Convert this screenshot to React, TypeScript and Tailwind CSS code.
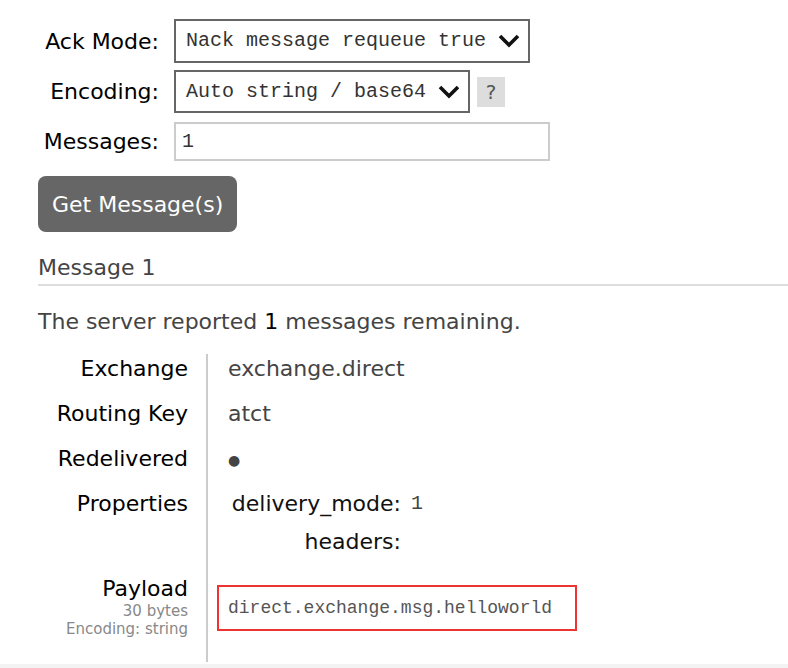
const sans = "font-['DejaVu_Sans',Verdana,sans-serif]"
const mono = "font-['Liberation_Mono','DejaVu_Sans_Mono',monospace]"

function Chevron() {
  return (
    <svg width="22" height="14" viewBox="0 0 22 14" className="shrink-0">
      <polyline points="2,2 11,11 20,2" fill="none" stroke="#111" strokeWidth="3.6" strokeLinejoin="miter" />
    </svg>
  )
}

const rows = [
  { label: "Exchange", value: "exchange.direct" },
  { label: "Routing Key", value: "atct" },
  { label: "Redelivered", value: "●" },
]

export default function App() {
  return (
    <div className={`${sans} min-h-[668px] bg-white flex flex-col`}>
      <div className="pl-[38px] pt-[19px] flex-1">
        {/* get messages form */}
        <div className="flex flex-col">
          <div className="flex items-center h-[44px]">
            <label className="w-[121px] text-right text-[22px] text-black">Ack Mode:</label>
            <div className="ml-[15px] w-[356px] h-[44px] border-2 border-[#666] flex items-center justify-between pl-[10px] pr-[8px]">
              <span className={`${mono} text-[20px] text-[#333]`}>Nack message requeue true</span>
              <Chevron />
            </div>
          </div>
          <div className="flex items-center h-[43px] mt-[7px]">
            <label className="w-[121px] text-right text-[22px] text-black">Encoding:</label>
            <div className="ml-[15px] w-[296px] h-[43px] border-2 border-[#666] flex items-center justify-between pl-[10px] pr-[8px]">
              <span className={`${mono} text-[20px] text-[#333]`}>Auto string / base64</span>
              <Chevron />
            </div>
            <span className="ml-[7px] w-[28px] h-[30px] bg-[#dddddd] text-[#555] text-[20px] flex items-center justify-center">?</span>
          </div>
          <div className="flex items-center h-[39px] mt-[9px]">
            <label className="w-[121px] text-right text-[22px] text-black">Messages:</label>
            <div className={`${mono} ml-[15px] w-[376px] h-[39px] border-2 border-[#cccccc] flex items-center pl-[6px] text-[20px] text-[#333]`}>1</div>
          </div>
        </div>

        <button className="mt-[15px] w-[199px] h-[56px] bg-[#666666] rounded-[8px] text-white text-[22px] text-left pl-[14px]">
          Get Message(s)
        </button>

        {/* result */}
        <div className="mt-[21px] border-b-2 border-[#dddddd] pb-[1px]">
          <h3 className="text-[22px] leading-[30px] text-[#444]">Message 1</h3>
        </div>
        <p className="mt-[21px] text-[22px] leading-[30px] text-[#444]">
          The server reported <span className="text-black">1</span> messages remaining.
        </p>

        <div className="mt-[17px] flex flex-col">
          {rows.map((r) => (
            <div key={r.label} className="flex">
              <div className="w-[170px] shrink-0 border-r-2 border-[#cccccc] pr-[18px] pb-[15px] text-right text-[22px] leading-[30px] text-black">
                {r.label}
              </div>
              <div className="pl-[20px] text-[22px] leading-[30px] text-[#444]">
                {r.label === "Redelivered" ? <span className="text-[14px] align-middle">●</span> : r.value}
              </div>
            </div>
          ))}
          <div className="flex">
            <div className="w-[170px] shrink-0 border-r-2 border-[#cccccc] pr-[18px] text-right text-[22px] leading-[30px] text-black">
              Properties
            </div>
            <div className="pl-[20px] pb-[17px] text-[22px] leading-[30px]">
              <div className="grid grid-cols-[173px_auto] gap-x-[10px] gap-y-[8px]">
                <span className="text-right text-[#111]">delivery_mode:</span>
                <span className={`${mono} text-[20px] text-[#444]`}>1</span>
                <span className="text-right text-[#111]">headers:</span>
                <span />
              </div>
            </div>
          </div>
          <div className="flex">
            <div className="w-[170px] shrink-0 border-r-2 border-[#cccccc] pr-[18px] pb-[24px] text-right">
              <div className="text-[22px] leading-[30px] text-black">Payload</div>
              <div className="text-[15px] leading-[18px] text-[#888] -mt-[2px]">30 bytes</div>
              <div className="text-[15px] leading-[18px] text-[#888]">Encoding: string</div>
            </div>
            <div className="pl-[9px] pt-[11px]">
              <div className="w-[360px] h-[46px] border-2 border-[#ee3333] flex items-center pl-[9px]">
                <span className={`${mono} text-[18px] text-[#555]`}>direct.exchange.msg.helloworld</span>
              </div>
            </div>
          </div>
        </div>
      </div>
      <div className="h-[4px] bg-[#f3f3f3]" />
    </div>
  )
}
